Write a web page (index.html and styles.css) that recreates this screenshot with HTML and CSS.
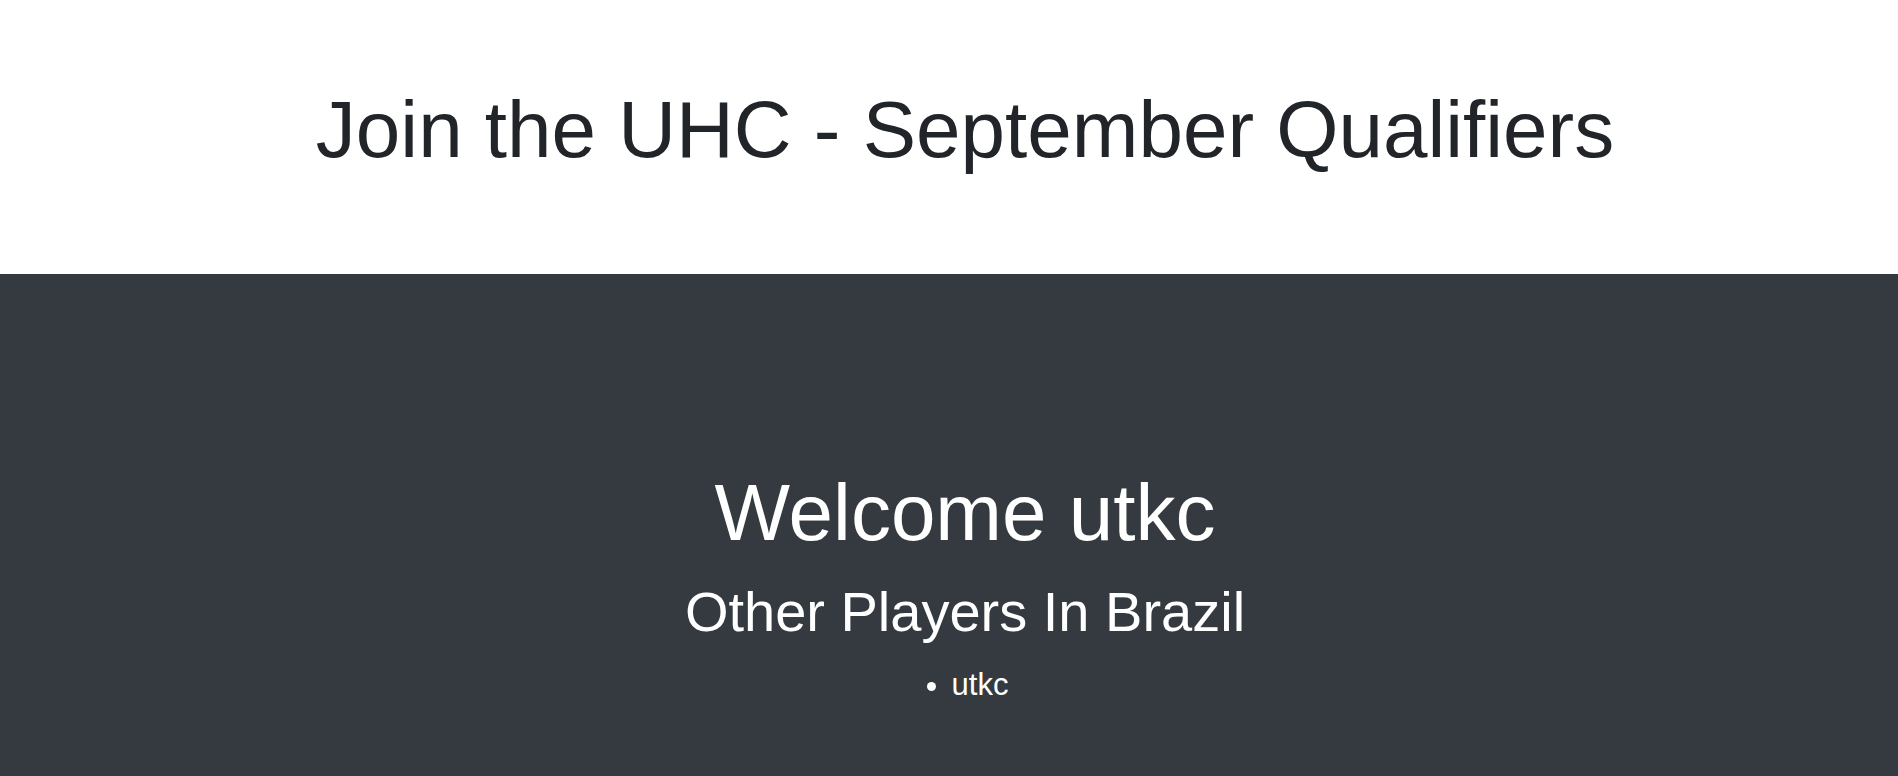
FILE: index.html
```html
<!DOCTYPE html>
<html lang="en">
<head>
<meta charset="utf-8">
<title>Join the UHC - September Qualifiers</title>
<link rel="stylesheet" href="styles.css">
</head>
<body>
<header class="hero">
  <h1 class="hero-title">Join the UHC - September Qualifiers</h1>
</header>
<main class="panel">
  <h2 class="welcome">Welcome utkc</h2>
  <h3 class="subtitle">Other Players In Brazil</h3>
  <ul class="players">
    <li>utkc</li>
  </ul>
</main>
</body>
</html>
```
FILE: styles.css
```css
* { box-sizing: border-box; }
html, body { margin: 0; padding: 0; height: 100%; }
body {
  font-family: "Liberation Sans", Arial, sans-serif;
  color: #212529;
  background: #343a40;
  display: flex;
  flex-direction: column;
}
.hero {
  background: #ffffff;
  height: 274px;
  padding: 82px 0 0 32px;
  text-align: center;
}
.hero-title {
  margin: 0;
  font-size: 80px;
  font-weight: 400;
  line-height: 1.2;
}
.panel {
  flex: 1;
  background: #343a40;
  color: #ffffff;
  text-align: center;
  padding: 191px 0 0 32px;
}
.welcome {
  margin: 0 0 17px;
  font-size: 80px;
  font-weight: 400;
  line-height: 1.2;
}
.subtitle {
  margin: 0 0 17px;
  font-size: 56px;
  font-weight: 400;
  line-height: 1.2;
}
.players {
  display: inline-block;
  margin: 0;
  padding: 0 0 0 30px;
  text-align: left;
  list-style-position: outside;
  font-size: 31px;
  line-height: 1.5;
}
```
